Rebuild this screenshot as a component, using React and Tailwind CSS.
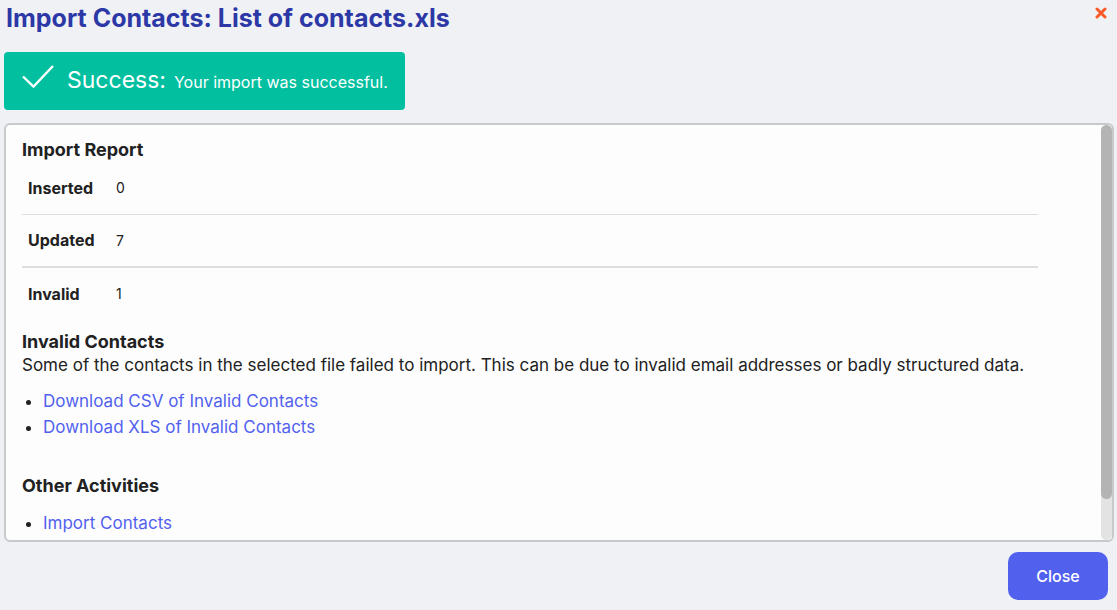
import React, { useState, useRef, useEffect } from 'react';

const report = [
  { label: 'Inserted', value: 0 },
  { label: 'Updated', value: 7 },
  { label: 'Invalid', value: 1 },
];

const LinkList = ({ items }) => (
  <ul className="list-disc pl-[21px] text-[17px] leading-[26px]">
    {items.map((item) => (
      <li key={item}>
        <a href="#" className="text-[#5161ee] hover:underline">{item}</a>
      </li>
    ))}
  </ul>
);

// Scrolling area with its own rounded scrollbar
const ScrollPanel = ({ children }) => {
  const viewRef = useRef(null);
  const [thumb, setThumb] = useState({ size: 100, top: 0 });

  const updateThumb = () => {
    const el = viewRef.current;
    if (!el) return;
    setThumb({
      size: (el.clientHeight / el.scrollHeight) * 100,
      top: (el.scrollTop / el.scrollHeight) * 100,
    });
  };

  useEffect(() => {
    updateThumb();
    window.addEventListener('resize', updateThumb);
    return () => window.removeEventListener('resize', updateThumb);
  }, []);

  return (
    <div className="flex min-h-0 flex-1 overflow-hidden rounded-md border-2 border-[#c8caca] bg-[#fdfdfd]">
      <div
        ref={viewRef}
        onScroll={updateThumb}
        className="min-w-0 flex-1 overflow-y-auto [scrollbar-width:none]"
      >
        {children}
      </div>
      <div className="w-[11px] shrink-0 rounded-full bg-[#e3e3e3]">
        <div style={{ height: `${thumb.top}%` }} />
        <div className="rounded-full bg-[#b4b4b4]" style={{ height: `${thumb.size}%` }} />
      </div>
    </div>
  );
};

const App = () => {
  return (
    <div className="flex h-screen flex-col bg-[#f0f1f5] pb-[10px] pl-1 pr-[3px] font-['Inter',sans-serif] text-[#212121]">
      <header className="flex items-start justify-between pl-[2px] pr-[7px]">
        <h1 className="text-[25px] font-bold leading-9 text-[#2c38a5]">
          Import Contacts: List of contacts.xls
        </h1>
        <button type="button" aria-label="Close dialog" className="mt-[7px]">
          <svg width="12" height="12" viewBox="0 0 12 12" fill="none" stroke="#fa5a28" strokeWidth="3" strokeLinecap="round">
            <path d="M2 2l8 8M10 2l-8 8" />
          </svg>
        </button>
      </header>

      <div role="status" className="mt-4 flex h-[58px] w-[401px] max-w-full shrink-0 items-center rounded bg-[#01bf9f] pl-[18px] text-white">
        <svg className="mb-2 shrink-0" width="32" height="24" viewBox="0 0 32 24" fill="none" stroke="currentColor" strokeWidth="2.4">
          <path d="M1 11.5l10.5 10L31 1" />
        </svg>
        <p className="ml-[13px] flex items-baseline gap-2 whitespace-nowrap leading-8">
          <span className="text-[23px]">Success:</span>
          <span className="text-[16px]">Your import was successful.</span>
        </p>
      </div>

      <main className="mt-[13px] flex min-h-0 flex-1 flex-col">
        <ScrollPanel>
          <div className="pb-[50px] pl-4 pr-[63px] pt-[13px]">
            <h2 className="text-[18px] font-bold leading-6">Import Report</h2>
            <table className="w-full text-[14px]">
              <tbody>
                {report.map((row) => (
                  <tr key={row.label} className="h-[52px] border-b border-[#dedede] even:h-[53px] even:border-b-2 last:border-0">
                    <th scope="row" className="w-[88px] pl-[6px] text-left text-[16px] font-bold">{row.label}</th>
                    <td className="pl-[6px]">{row.value}</td>
                  </tr>
                ))}
              </tbody>
            </table>

            <h2 className="mt-[11px] text-[18px] font-bold leading-6">Invalid Contacts</h2>
            <p className="mb-3 whitespace-nowrap text-[17px] leading-[22px]">
              Some of the contacts in the selected file failed to import. This can be due to invalid email addresses or badly structured data.
            </p>
            <LinkList items={['Download CSV of Invalid Contacts', 'Download XLS of Invalid Contacts']} />

            <h2 className="mb-3 mt-[34px] text-[18px] font-bold leading-6">Other Activities</h2>
            <LinkList items={['Import Contacts']} />
          </div>
        </ScrollPanel>
      </main>

      <footer className="mt-[10px] flex justify-end pr-[6px]">
        <button type="button" className="h-12 w-[100px] rounded-[10px] bg-[#5161ee] text-[16px] font-medium text-white">
          Close
        </button>
      </footer>
    </div>
  );
};

export default App;
